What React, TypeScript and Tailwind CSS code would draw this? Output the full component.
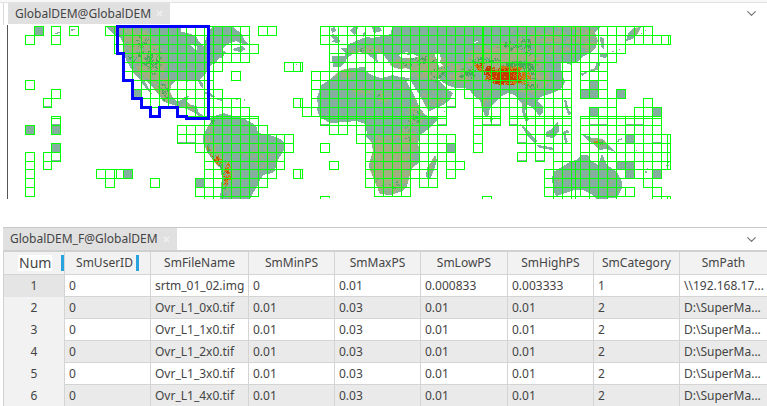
import type { ReactNode } from 'react'
import { ChevronDown, X } from 'lucide-react'

// ---------------- DEM tile index ----------------
const tileX = (i: number) => Math.floor(25.08 + 8.962 * i)
const tileY = (i: number) => Math.floor(26.59 + 8.962 * i)

// one entry per tile row: [first column, end column]
const TILES: [number, number][][] = [
  [[1, 2], [3, 4], [5, 6], [9, 25], [26, 28], [33, 70]],
  [[0, 1], [3, 4], [10, 25], [33, 72]],
  [[10, 26], [34, 67]],
  [[11, 25], [34, 66]],
  [[11, 22], [29, 31], [34, 61], [62, 65]],
  [[11, 21], [23, 24], [32, 61], [62, 65]],
  [[0, 1], [12, 21], [32, 61], [62, 65]],
  [[3, 4], [12, 22], [32, 48], [49, 61], [62, 65], [66, 67]],
  [[2, 3], [13, 24], [30, 31], [32, 48], [50, 61], [65, 66], [69, 70]],
  [[14, 15], [17, 25], [31, 47], [50, 53], [54, 61], [63, 66], [68, 71]],
  [[3, 4], [20, 26], [33, 47], [50, 53], [54, 61], [62, 71]],
  [[0, 1], [3, 4], [17, 27], [34, 36], [37, 46], [50, 51], [55, 61], [62, 71]],
  [[17, 30], [37, 48], [50, 51], [55, 61], [62, 72]],
  [[3, 4], [19, 30], [33, 34], [38, 48], [50, 51], [56, 61], [62, 72]],
  [[0, 1], [2, 4], [20, 29], [38, 48], [55, 56], [57, 58], [59, 61], [62, 72]],
  [[0, 1], [2, 3], [20, 29], [34, 35], [38, 46], [47, 49], [59, 72]],
  [[0, 1], [8, 12], [20, 28], [30, 31], [38, 46], [47, 48], [58, 71]],
  [[0, 1], [9, 10], [14, 15], [19, 27], [38, 43], [44, 46], [58, 66], [69, 70]],
  [[0, 1], [19, 26], [39, 43], [58, 68], [70, 71]],
]

const TILE_PATH = TILES.map((row, r) =>
  row.map(([a, b]) => {
    const y0 = tileY(r) + 0.5
    const y1 = tileY(r + 1) + 0.5
    let d = `M${tileX(a)} ${y0}H${tileX(b) + 1}M${tileX(a)} ${y1}H${tileX(b) + 1}`
    for (let c = a; c <= b; c++) d += `M${tileX(c) + 0.5} ${y0}V${y1}`
    return d
  }).join(''),
).join('')

// seams where two source sets overlap, and the row cut by the lower edge
const SEAMS =
  'M51 118.5H61M204 118.5H259M320 118.5H447M473 118.5H501M509 118.5H572M580 118.5H662' +
  'M114.5 26V54M116.5 169V178M204.5 26V44M300.5 62V71M300.5 98V107M300.5 169V178M483.5 26V62' +
  'M575.5 26V62M575.5 161V199M668.5 35V44M667.5 134V169M571.5 161V199' +
  'M204.5 196V199M213.5 196V199M222.5 196V199M231.5 196V199M240.5 196V199M249.5 196V199' +
  'M320.5 199V196.5H329.5V198M482.5 199V196.5H491.5V199M553.5 196V199M562.5 196V199' +
  'M589.5 196V199M598.5 196V199M607.5 196V199M616.5 196V199M661.5 187V196.5H670.5V199M652.5 196V199M661.5 196V199M667.5 196V199'

const FILLED: [number, number][] = [
  [1, 0], [0, 11], [3, 11], [3, 13], [12, 7], [11, 16], [19, 17], [47, 13], [63, 6], [62, 7], [63, 7],
  [66, 7], [63, 9], [70, 9], [67, 12], [66, 15], [67, 15], [67, 16], [70, 16],
]

// ---------------- Land ----------------
const LAND = [
  // North America
  '107,27 181,27 181,32 188,33 196,36 199,42 204,46 206,38 208,33 212,27 233,27 238,31 243,35 244,40 250,45 243,44 236,41 227,44 222,50 226,52 223,57 218,59 216,63 211,65 208,70 205,75 200,79 203,84 203,88 201,87 198,81 191,80 187,82 182,80 175,81 171,85 170,92 173,98 177,101 182,100 184,97 189,96 187,102 191,105 197,106 198,112 204,116 210,118 208,120 200,117 195,113 189,110 180,107 170,104 163,101 160,96 155,90 148,82 144,80 150,90 152,94 147,90 140,80 133,72 129,65 126,60 124,52 124,44 119,36 113,34 110,31',
  '203,92 208,92 215,96 214,98 208,95', '217,98 224,98 223,101 217,100', '232,49 242,46 246,49 241,52 234,51',
  // South America
  '210,118 217,115 223,113 233,116 243,118 252,123 257,128 258,133 270,135 280,139 285,143 284,150 278,160 275,170 272,173 263,175 259,182 257,187 253,193 250,199 220,199 221,187 222,177 220,168 213,160 208,153 203,143 203,135 207,128 211,122',
  // Africa
  '330,79 326,82 320,86 319,92 317,98 318,105 317,110 320,117 325,120 330,123 345,122 357,121 365,124 367,133 366,137 372,143 373,152 370,160 369,167 373,177 377,187 380,194 390,195 402,191 407,186 410,174 413,167 419,163 420,153 418,143 420,135 430,128 437,120 438,116 430,117 427,116 422,111 417,100 412,90 407,82 410,78 400,77 392,75 387,77 380,78 372,75 367,72 365,67 353,68 345,69 338,72 334,76',
  '435,155 437,160 434,170 430,179 426,177 427,168 431,162',
  // Eurasia
  '332,56 345,56 345,53 340,48 347,48 348,44 354,42 361,39 366,37 373,38 382,36 391,34 392,27 600,27 595,33 598,41 596,47 590,53 582,57 578,62 572,62 571,65 566,63 561,63 561,71 565,82 562,88 557,91 547,95 540,97 538,101 543,107 543,113 539,116 535,110 530,106 527,105 525,112 529,120 526,122 522,112 522,104 518,99 515,95 508,93 502,96 495,102 490,108 488,117 485,116 482,108 480,100 473,95 470,90 465,88 455,88 447,85 438,79 442,84 447,89 453,93 450,100 443,105 430,111 427,109 422,99 417,91 412,83 410,77 411,70 406,68 400,69 392,67 390,64 388,61 382,53 377,54 377,59 379,63 375,61 371,57 367,54 360,52 353,54 347,58 345,63 340,67 333,67',
  '330,36 332,34 336,35 340,41 338,43 332,42 334,39', '331,28 335,27 336,31 332,33', '350,30 353,27 358,27 357,32 354,35', '372,27 380,27 382,31 374,33', '363,33 366,31 365,36 363,37', '490,117 493,118 492,123 490,122',
  // Pacific rim
  '626,41 628,33 634,28 641,27 638,33 632,39', '600,37 604,38 604,49 601,47', '600,54 608,54 606,58 600,57', '597,62 600,63 599,69 594,71 588,72 582,76 580,74 588,71 595,68',
  '520,124 525,127 531,134 537,141 535,143 529,138', '536,145 545,146 554,148 552,150 540,148', '546,132 552,129 558,121 559,131 554,138 546,137', '563,132 567,130 570,132 565,134 568,142 565,143', '564,100 567,101 568,108 571,113 569,116 566,109',
  '583,135 589,136 592,138 603,139 609,146 615,152 607,149 599,150 594,144 587,140',
  // Australia
  '552,180 553,172 562,167 571,161 577,160 581,155 588,155 590,160 598,165 602,154 607,165 617,172 622,182 622,188 617,198 596,199 591,194 583,190 575,190 568,192 562,194 556,196 554,192',
]

// seas and lakes cut out of the land
const WATER = [
  '399,55 402,53 408,52 407,55 413,54 419,57 411,58 401,58', '434,53 439,53 441,58 440,62 443,66 439,67 437,60',
  '407,82 411,83 417,92 421,102 426,110 428,113 426,116 420,108 415,97', '191,45 197,46 197,50 193,48', '437,78 439,79 445,85 441,83', '473,42 479,41 475,43',
]

// ---------------- Relief speckle ----------------
type Patch = [cx: number, cy: number, rx: number, ry: number, density: number]

const OCHRE: Patch[] = [
  [135, 42, 20, 15, 0.75], [150, 63, 18, 20, 0.85], [163, 90, 13, 15, 0.8], [186, 107, 12, 5, 0.5], [120, 30, 12, 6, 0.5],
  [214, 159, 12, 16, 0.6], [226, 180, 10, 25, 0.4], [262, 155, 22, 18, 0.3], [209, 140, 6, 20, 0.5],
  [389, 165, 27, 34, 0.9], [408, 142, 13, 20, 0.7], [415, 114, 9, 14, 0.6], [343, 73, 15, 6, 0.6], [363, 91, 12, 5, 0.5], [384, 96, 8, 8, 0.5], [401, 92, 6, 30, 0.25],
  [365, 50, 20, 7, 0.5], [405, 64, 25, 7, 0.65], [430, 67, 22, 14, 0.85], [461, 73, 20, 12, 0.7], [504, 59, 42, 18, 0.85], [545, 42, 42, 20, 0.5], [585, 35, 20, 18, 0.6], [532, 80, 20, 15, 0.7], [430, 98, 18, 8, 0.4], [425, 104, 6, 8, 0.5], [485, 100, 7, 12, 0.35], [526, 95, 6, 12, 0.4],
  [431, 165, 5, 12, 0.5], [600, 141, 13, 7, 0.6], [636, 32, 7, 6, 0.5], [570, 176, 20, 12, 0.25], [610, 185, 10, 16, 0.25], [592, 70, 7, 4, 0.5],
]
const GREEN: Patch[] = [
  [151, 60, 11, 15, 0.45], [151, 61, 9, 8, 0.5], [136, 57, 9, 6, 0.4], [141, 42, 11, 8, 0.3], [162, 92, 7, 11, 0.38], [212, 123, 4, 7, 0.5], [208, 149, 5, 9, 0.4], [218, 162, 8, 9, 0.4], [224, 182, 6, 18, 0.28],
  [364, 50, 9, 4, 0.35], [423, 60, 14, 5, 0.4], [439, 74, 10, 9, 0.38], [467, 73, 9, 7, 0.55], [485, 60, 16, 4, 0.45], [508, 46, 12, 6, 0.42], [526, 46, 8, 11, 0.42], [516, 64, 20, 4, 0.65], [530, 70, 8, 13, 0.5], [529, 85, 9, 7, 0.48],
  [416, 114, 5, 9, 0.45], [408, 132, 5, 18, 0.24], [388, 183, 16, 8, 0.15], [399, 186, 4, 5, 0.35], [403, 64, 12, 3, 0.25], [603, 142, 8, 4, 0.35], [378, 95, 4, 3, 0.4],
]
const ORANGE: Patch[] = [
  [216, 160, 7, 6, 0.5], [227, 173, 5, 12, 0.55], [225, 184, 4, 9, 0.35], [209, 151, 4, 5, 0.4], [478, 66, 6, 6, 0.5], [506, 75, 23, 10, 0.95], [525, 76, 7, 11, 0.5], [595, 141, 4, 2, 0.4],
]
const RED: Patch[] = [
  [226, 174, 4, 11, 0.35], [215, 159, 6, 4, 0.3], [479, 66, 5, 4, 0.42], [504, 76, 20, 9, 0.72], [490, 71, 8, 6, 0.65], [226, 181, 3, 5, 0.3],
]

function hash(x: number, y: number, seed: number) {
  let h = Math.imul(x, 374761393) ^ Math.imul(y, 668265263) ^ Math.imul(seed, 974634777)
  h = Math.imul(h ^ (h >>> 13), 1274126177)
  return ((h ^ (h >>> 16)) >>> 0) / 4294967296
}

// clumped scatter of single pixels, denser towards the middle of each patch
function speckle(patches: Patch[], seed: number) {
  let d = ''
  for (const [cx, cy, rx, ry, density] of patches) {
    for (let y = cy - ry; y < cy + ry; y++) {
      for (let x = cx - rx; x < cx + rx; x++) {
        const k = ((x - cx) / rx) ** 2 + ((y - cy) / ry) ** 2
        const n = 0.5 * hash(Math.floor(x / 3), Math.floor(y / 3), seed) + 0.5 * hash(x, y, seed + 1)
        if (k < 1 && n < density * (1.1 - k * 0.7)) d += `M${x} ${y}h1v1h-1z`
      }
    }
  }
  return d
}

function DemMap() {
  return (
    <svg className="block w-full h-auto" viewBox="0 25 767 174" shapeRendering="crispEdges" role="img" aria-label="GlobalDEM">
      <defs>
        <clipPath id="land">
          {LAND.map((p, i) => <polygon key={i} points={p} />)}
        </clipPath>
      </defs>
      <g fill="#84ae9e">
        {LAND.map((p, i) => <polygon key={i} points={p} />)}
      </g>
      <g clipPath="url(#land)">
        <path d={speckle(OCHRE, 11)} fill="#a2ae80" />
        <path d={speckle(GREEN, 23)} fill="#4ba65c" />
        <path d={speckle(ORANGE, 37)} fill="#cb7d14" />
        <path d={speckle(RED, 41)} fill="#c23c00" />
      </g>
      <g fill="#fff">
        {WATER.map((p, i) => <polygon key={i} points={p} />)}
      </g>
      <g fill="#84ae9e">
        {FILLED.map(([c, r]) => <rect key={`${c}-${r}`} x={tileX(c)} y={tileY(r)} width={9} height={9} />)}
        <path d="M44 106h8v1h-8zM52 160h8v1h-8zM177 142h18v1h-18zM52 124h8v1h-8zM590 124h17v2h-17zM626 124h17v2h-17zM652 142h9v1h-9zM437 124h9v1h-9zM446 106h9v1h-9zM483 124h17v1h-17zM509 124h8v1h-8zM517 142h9v1h-9zM517 160h9v1h-9zM535 160h9v1h-9zM320 124h9v1h-9z" />
        <path d="M55 34h3v-1h3v-2h-1v1h-3v1h-2zM71 31h2v-1h2v-1h-4zM244 99h1v2h-1zM236 99h2v1h-2zM612 51h2v1h-2zM619 49h1v1h-1zM616 142h3v-2h3v-2h-1v1h-3v2h-2zM634 148h1v2h-1zM636 150h1v1h-1zM645 161h2v1h-2zM647 168h1v1h-1zM645 171h2v2h-2zM666 165h3v1h-3zM667 162h2v1h-2zM296 64h1v1h-1zM444 111h1v1h-1zM645 30h1v1h-1zM641 33h1v1h-1zM628 171h1v1h-1z" />
      </g>
      <path d={TILE_PATH + SEAMS} fill="none" stroke="#00ff00" strokeWidth={1} />
      <path
        d="M117.5 26.5V53.5H123.5V80.5H132.5V98.5H141.5V107.5H150.5V116.5H159.5V107.5H177.5V116.5H186.5V118.5H208.5V26.5Z"
        fill="none" stroke="#0000ff" strokeWidth={3}
      />
      <rect x={7} y={25} width={1} height={174} fill="#555" />
    </svg>
  )
}

// ---------------- Panels ----------------
function TabBar({ title, className, children }: { title: string; className: string; children?: ReactNode }) {
  return (
    <header className={`flex items-stretch justify-between pr-2 ${className}`}>
      <div className="flex items-center gap-1 bg-[#e0e0e0] pl-[7px] pr-1.5">
        <span className="whitespace-nowrap">{title}</span>
        <button type="button" aria-label={`Close ${title}`} className="text-[#f2f2f2]">
          <X size={9} strokeWidth={3} />
        </button>
      </div>
      {children}
    </header>
  )
}

function MenuButton({ label }: { label: string }) {
  return (
    <button type="button" aria-label={label} className="text-[#777]">
      <ChevronDown size={15} strokeWidth={2} />
    </button>
  )
}

const COLUMNS = [
  { name: 'SmUserID', width: 'w-[86px]' },
  { name: 'SmFileName', width: 'w-[98px]' },
  { name: 'SmMinPS', width: 'w-[86px]' },
  { name: 'SmMaxPS', width: 'w-[86px]' },
  { name: 'SmLowPS', width: 'w-[87px]' },
  { name: 'SmHighPS', width: 'w-[86px]' },
  { name: 'SmCategory', width: 'w-[86px]' },
  { name: 'SmPath', width: '' },
]

const ROWS = [
  ['0', 'srtm_01_02.img', '0', '0.01', '0.000833', '0.003333', '1', '\\\\192.168.17...'],
  ...[0, 1, 2, 3, 4].map((n) => ['0', `Ovr_L1_${n}x0.tif`, '0.01', '0.03', '0.01', '0.01', '2', 'D:\\SuperMa...']),
]

function AttributeTable() {
  return (
    <table className="w-full table-fixed border-separate border-spacing-0 border-l border-[#d0d0d0]">
      <thead>
        <tr className="h-[23px] bg-[#f2f2f2]">
          <th className="w-[60px] border-b border-[#d4d4d4] p-0 font-normal">
            <div className="flex items-center justify-between pl-[14px]">
              <span className="bg-white px-px text-[14px] leading-4">Num</span>
              <span className="h-4 w-[3px] bg-[#29a3e0]" />
            </div>
          </th>
          {COLUMNS.map((c, i) => (
            <th key={c.name} className={`${c.width} border-b border-l border-[#d4d4d4] p-0 font-normal`}>
              {i === 0 ? (
                <div className="flex items-center justify-center gap-[3px]">
                  <span>{c.name}</span>
                  <span className="h-4 w-[3px] bg-[#29a3e0]" />
                </div>
              ) : c.name}
            </th>
          ))}
        </tr>
      </thead>
      <tbody>
        {ROWS.map((row, r) => (
          <tr key={r} className={`h-[22px] ${r % 2 ? 'bg-[#eaeaea]' : 'bg-white'}`}>
            <th className={`p-0 font-normal ${r === 0 ? 'bg-[#e5e5e5]' : 'bg-[#f2f2f2]'}`}>{r + 1}</th>
            {row.map((v, i) => (
              <td key={i} className="overflow-hidden whitespace-nowrap border-b border-l border-[#d4d4d4] py-0 pl-1 pr-0">{v}</td>
            ))}
          </tr>
        ))}
      </tbody>
    </table>
  )
}

export default function App() {
  return (
    <main className="overflow-hidden bg-white font-['Noto_Sans','Open_Sans',sans-serif] text-[12px] leading-4 text-[#444]">
      <section>
        <div className="h-[3px] border-b border-[#e2e2e2] bg-[#f8f8f8]" />
        <TabBar title="GlobalDEM@GlobalDEM" className="ml-[3px] h-[22px] border-l border-[#d8d8d8] pb-px pl-1">
          <MenuButton label="Map windows" />
        </TabBar>
        <DemMap />
      </section>
      <section className="ml-[3px] mt-7">
        <TabBar title="GlobalDEM_F@GlobalDEM" className="h-[23px] border-t border-[#c8c8c8]">
          <MenuButton label="Table windows" />
        </TabBar>
        <div className="border-t-2 border-[#d0d0d0]">
          <AttributeTable />
        </div>
      </section>
    </main>
  )
}
